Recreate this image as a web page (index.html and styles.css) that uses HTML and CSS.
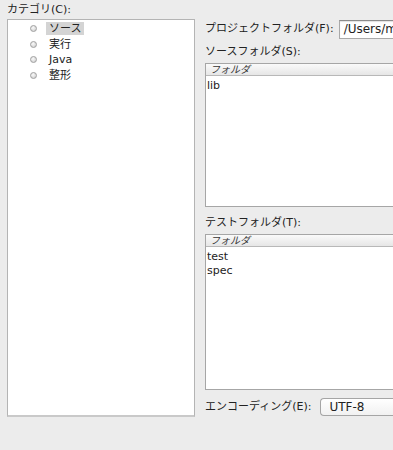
FILE: index.html
```html
<!DOCTYPE html>
<html lang="ja">
<head>
  <meta charset="UTF-8" />
  <title>プロジェクトプロパティ</title>
  <link rel="stylesheet" href="styles.css">
</head>
<body>
  <div class="dialog">
    <div class="categories">
      <div class="label">カテゴリ(C):</div>
      <ul class="tree">
        <li><span class="dot"></span><span class="name selected">ソース</span></li>
        <li><span class="dot"></span><span class="name">実行</span></li>
        <li><span class="dot"></span><span class="name">Java</span></li>
        <li><span class="dot"></span><span class="name">整形</span></li>
      </ul>
    </div>

    <div class="panel">
      <div class="row project">
        <span class="label">プロジェクトフォルダ(F):</span>
        <div class="field">/Users/m</div>
      </div>

      <div class="label">ソースフォルダ(S):</div>
      <div class="table source">
        <div class="thead">フォルダ</div>
        <div class="cell">lib</div>
      </div>

      <div class="label">テストフォルダ(T):</div>
      <div class="table test">
        <div class="thead">フォルダ</div>
        <div class="cell">test</div>
        <div class="cell">spec</div>
      </div>

      <div class="row encoding">
        <span class="label">エンコーディング(E):</span>
        <div class="combo">UTF-8</div>
      </div>
    </div>
  </div>
</body>
</html>
```

FILE: styles.css
```css
* { box-sizing: border-box; margin: 0; padding: 0; }
html, body {
  width: 393px;
  height: 450px;
  overflow: hidden;
}
body {
  background: #ececec;
  font-family: "Lucida Grande", "DejaVu Sans", "Noto Sans CJK JP", sans-serif;
  font-size: 11px;
  color: #222;
}
.dialog {
  display: flex;
  padding: 3px 0 0 7px;
}
.categories {
  width: 188px;
  flex-shrink: 0;
}
.categories .label {
  height: 16px;
  line-height: 13px;
}
.tree {
  list-style: none;
  height: 398px;
  background: #fff;
  border: 1px solid #b4b4b4;
  border-bottom: 2px solid #c9c9c9;
  padding-top: 1px;
}
.tree li {
  display: flex;
  align-items: center;
  height: 15.5px;
  padding-left: 22px;
}
.dot {
  width: 7px;
  height: 7px;
  border-radius: 50%;
  border: 1px solid #a0a0a0;
  background: radial-gradient(circle at 40% 35%, #fafafa, #c8c8c8);
  margin-right: 9px;
}
.name {
  padding: 0 3px;
  line-height: 13px;
}
.name.selected {
  background: #d4d4d4;
  padding-right: 3px;
}

.panel {
  flex: 1;
  padding-left: 10px;
  overflow: hidden;
}
.row {
  display: flex;
  align-items: center;
  white-space: nowrap;
}
.project {
  height: 22px;
  margin-top: 15px;
  margin-bottom: 5px;
}
.panel .label {
  white-space: nowrap;
  height: 16px;
  line-height: 14px;
}
.row .label {
  height: auto;
}
.field {
  margin-left: 5px;
  height: 19px;
  line-height: 17px;
  padding-left: 4px;
  background: #fff;
  border: 1px solid #a9a9a9;
  border-top-color: #8c8c8c;
  box-shadow: inset 0 1px 1px rgba(0,0,0,0.12);
  font-size: 12px;
  flex: 1;
  min-width: 80px;
}
.table {
  background: #fff;
  border: 1px solid #a6a6a6;
  margin-right: -2px;
  margin-top: 2px;
}
.table.source {
  height: 144px;
  margin-bottom: 9px;
}
.table.test {
  height: 156px;
}
.thead {
  height: 12px;
  line-height: 11px;
  font-size: 10px;
  padding-left: 4px;
  color: #333;
  background: linear-gradient(#fafafa, #e6e6e6);
  border-bottom: 1px solid #b8b8b8;
  font-style: italic;
}
.cell {
  padding-left: 1px;
  height: 14px;
  line-height: 14px;
}
.thead + .cell {
  margin-top: 3px;
}
.encoding {
  margin-top: 8px;
}
.combo {
  margin-left: 9px;
  flex: 1;
  min-width: 80px;
  height: 18px;
  line-height: 16px;
  padding-left: 8px;
  font-size: 12px;
  background: linear-gradient(#ffffff, #f1f1f1);
  border: 1px solid #a5a5a5;
  border-radius: 4px 0 0 4px;
  border-right: none;
}
```
